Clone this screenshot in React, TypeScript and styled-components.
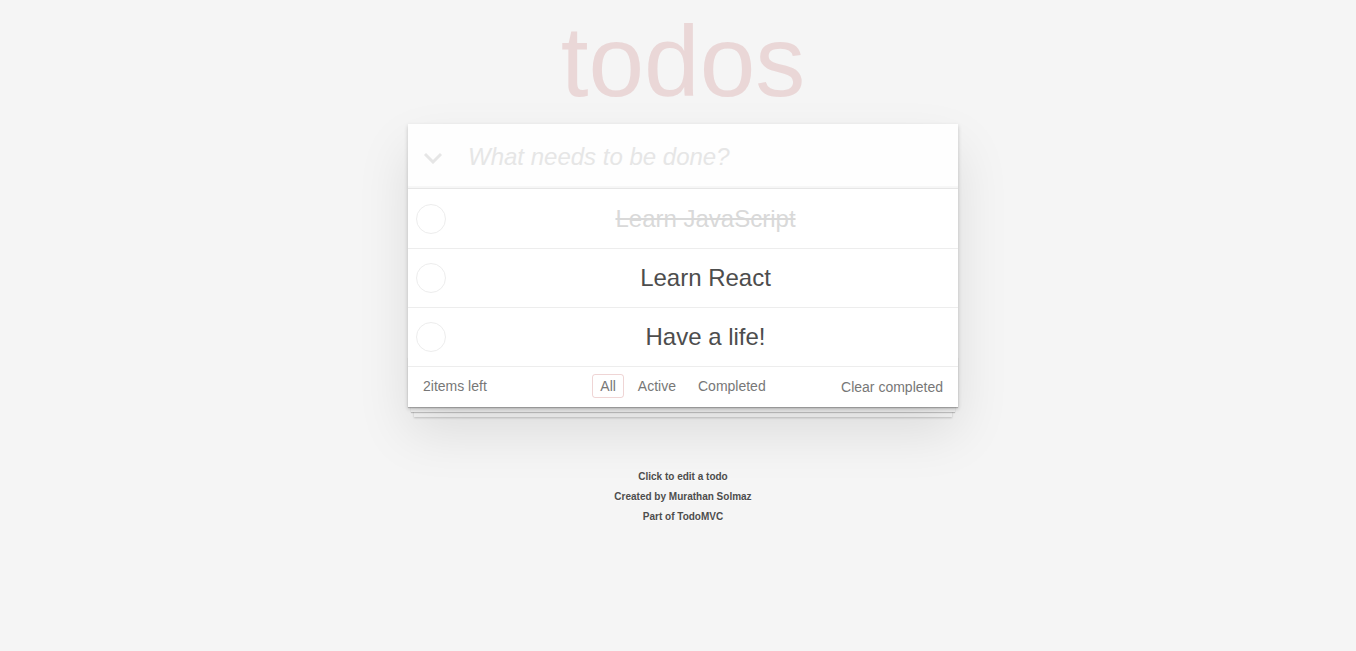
import React from "react";
import styled, { createGlobalStyle } from "styled-components";

const Global = createGlobalStyle`
  html, body { margin: 0; padding: 0; }
  body {
    background: #f5f5f5;
    color: #4d4d4d;
    font: 14px "Liberation Sans", Arial, Helvetica, sans-serif;
    line-height: 1.4em;
    -webkit-font-smoothing: antialiased;
  }
  * { box-sizing: border-box; }
`;

const Page = styled.div`
  width: 550px;
  margin: 0 auto;
  padding-top: 11px;
  position: relative;
  left: 5px;
`;

const Title = styled.h1`
  margin: 0;
  font-size: 100px;
  line-height: 100px;
  font-weight: 100;
  text-align: center;
  color: rgba(175, 47, 47, 0.15);
`;

const Card = styled.section`
  margin-top: 13px;
  background: #fff;
  position: relative;
  box-shadow: 0 2px 4px 0 rgba(0, 0, 0, 0.2), 0 25px 50px 0 rgba(0, 0, 0, 0.1);
`;

const Header = styled.header`
  display: flex;
  align-items: center;
  height: 64px;
  box-shadow: inset 0 -2px 1px rgba(0, 0, 0, 0.03);
  background: rgba(0, 0, 0, 0.003);
`;

const ToggleAll = styled.button`
  width: 50px;
  height: 64px;
  border: none;
  background: none;
  padding: 0;
  display: flex;
  align-items: center;
  justify-content: center;
  cursor: pointer;
`;

const NewTodo = styled.input`
  flex: 1;
  min-width: 0;
  height: 64px;
  border: none;
  outline: none;
  background: transparent;
  padding: 2px 16px 0 10px;
  font-family: inherit;
  font-size: 24px;
  line-height: 1.4em;
  color: #4d4d4d;
  &::placeholder {
    font-style: italic;
    font-weight: 300;
    color: #e6e6e6;
  }
`;

const List = styled.ul`
  margin: 0;
  padding: 0;
  list-style: none;
  border-top: 1px solid #e6e6e6;
`;

const Item = styled.li`
  display: flex;
  align-items: center;
  border-bottom: 1px solid #ededed;
  font-size: 24px;
  &:first-child {
    padding-top: 1px;
  }
`;

const Toggle = styled.span`
  flex: none;
  width: 30px;
  height: 30px;
  margin-left: 8px;
  border-radius: 50%;
  border: 1px solid #ededed;
`;

const Label = styled.label<{ $done?: boolean }>`
  flex: 1;
  display: block;
  padding: 15px 15px 15px 22px;
  line-height: 28px;
  text-align: center;
  color: ${(p) => (p.$done ? "#d9d9d9" : "#4d4d4d")};
  text-decoration: ${(p) => (p.$done ? "line-through" : "none")};
`;

const Footer = styled.footer`
  position: relative;
  display: grid;
  grid-template-columns: 1fr auto 1fr;
  align-items: center;
  height: 40px;
  padding: 10px 15px;
  color: #777;
  &::before {
    content: "";
    position: absolute;
    right: 0;
    bottom: 0;
    left: 0;
    height: 50px;
    overflow: hidden;
    z-index: -1;
    box-shadow: 0 1px 1px rgba(0, 0, 0, 0.2), 0 8px 0 -3px #f6f6f6,
      0 9px 1px -3px rgba(0, 0, 0, 0.2), 0 16px 0 -6px #f6f6f6,
      0 17px 2px -6px rgba(0, 0, 0, 0.2);
  }
`;

const Count = styled.span`
  text-align: left;
`;

const Filters = styled.ul`
  display: flex;
  margin: 0;
  padding: 0;
  list-style: none;
`;

const FilterLink = styled.a<{ $selected?: boolean }>`
  color: inherit;
  margin: 3px;
  padding: 3px 7px;
  text-decoration: none;
  border: 1px solid ${(p) => (p.$selected ? "rgba(175, 47, 47, 0.2)" : "transparent")};
  border-radius: 3px;
  cursor: pointer;
`;

const Clear = styled.button`
  justify-self: end;
  border: none;
  background: none;
  padding: 0;
  margin: 0;
  font: inherit;
  color: inherit;
  line-height: 20px;
  cursor: pointer;
`;

const Info = styled.footer`
  margin-top: 65px;
  display: flex;
  flex-direction: column;
  gap: 10px;
  align-items: center;
  font-size: 10px;
  line-height: 10px;
  font-weight: bold;
  color: #4d4d4d;
  text-shadow: 0 1px 0 rgba(255, 255, 255, 0.5);
`;

const InfoLine = styled.p`
  margin: 0;
`;

const Chevron = () => (
  <svg width="20" height="12" viewBox="0 0 20 12" style={{ marginTop: 4 }}>
    <polyline points="2,2 10,10 18,2" fill="none" stroke="#e6e6e6" strokeWidth="3" />
  </svg>
);

const todos = [
  { text: "Learn JavaScript", done: true },
  { text: "Learn React", done: false },
  { text: "Have a life!", done: false },
];

export default function App() {
  return (
    <>
      <Global />
      <Page>
        <Title>todos</Title>
        <Card>
          <Header>
            <ToggleAll aria-label="Toggle all">
              <Chevron />
            </ToggleAll>
            <NewTodo placeholder="What needs to be done?" />
          </Header>
          <List>
            {todos.map((t) => (
              <Item key={t.text}>
                <Toggle />
                <Label $done={t.done}>{t.text}</Label>
              </Item>
            ))}
          </List>
          <Footer>
            <Count>2items left</Count>
            <Filters>
              <li><FilterLink $selected>All</FilterLink></li>
              <li><FilterLink>Active</FilterLink></li>
              <li><FilterLink>Completed</FilterLink></li>
            </Filters>
            <Clear>Clear completed</Clear>
          </Footer>
        </Card>
        <Info>
          <InfoLine>Click to edit a todo</InfoLine>
          <InfoLine>Created by Murathan Solmaz</InfoLine>
          <InfoLine>Part of TodoMVC</InfoLine>
        </Info>
      </Page>
    </>
  );
}
